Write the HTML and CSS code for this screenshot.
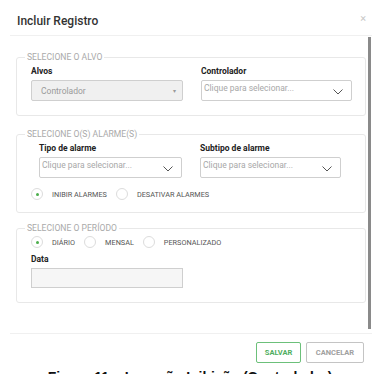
FILE: index.html
```html
<!DOCTYPE html>
<html lang="pt">
<head>
<meta charset="utf-8">
<title>Incluir Registro</title>
<link rel="stylesheet" href="styles.css">
</head>
<body>
<div class="modal">
  <div class="modal-header">
    <h1 class="modal-title">Incluir Registro</h1>
    <span class="close">&times;</span>
  </div>
  <div class="divider"></div>
  <div class="modal-body">
    <fieldset class="group group-alvo">
      <legend>Selecione o alvo</legend>
      <div class="cols cols-alvo">
        <div class="field">
          <label class="label">Alvos</label>
          <div class="select select-disabled"><span>Controlador</span><span class="caret">&#9662;</span></div>
        </div>
        <div class="field">
          <label class="label">Controlador</label>
          <div class="select"><span class="ph">Clique para selecionar...</span><svg class="chev" width="10" height="6" viewBox="0 0 10 6"><path d="M0.5 0.5 L5 5 L9.5 0.5" fill="none" stroke="#555" stroke-width="1"/></svg></div>
        </div>
      </div>
    </fieldset>

    <fieldset class="group group-alarme">
      <legend>Selecione o(s) alarme(s)</legend>
      <div class="cols cols-alarme">
        <div class="field">
          <label class="label">Tipo de alarme</label>
          <div class="select"><span class="ph">Clique para selecionar...</span><svg class="chev" width="10" height="6" viewBox="0 0 10 6"><path d="M0.5 0.5 L5 5 L9.5 0.5" fill="none" stroke="#555" stroke-width="1"/></svg></div>
        </div>
        <div class="field">
          <label class="label">Subtipo de alarme</label>
          <div class="select"><span class="ph">Clique para selecionar...</span><svg class="chev" width="10" height="6" viewBox="0 0 10 6"><path d="M0.5 0.5 L5 5 L9.5 0.5" fill="none" stroke="#555" stroke-width="1"/></svg></div>
        </div>
      </div>
      <div class="radios radios-alarme">
        <span class="radio checked"></span><span class="rlabel">Inibir alarmes</span>
        <span class="radio"></span><span class="rlabel">Desativar alarmes</span>
      </div>
    </fieldset>

    <fieldset class="group group-periodo">
      <legend>Selecione o período</legend>
      <div class="radios">
        <span class="radio checked"></span><span class="rlabel">Diário</span>
        <span class="radio"></span><span class="rlabel">Mensal</span>
        <span class="radio"></span><span class="rlabel">Personalizado</span>
      </div>
      <div class="field field-data">
        <label class="label">Data</label>
        <div class="input"></div>
      </div>
    </fieldset>
    <div class="scrollbar"></div>
  </div>
  <div class="divider"></div>
  <div class="modal-footer">
    <button class="btn btn-save">SALVAR</button>
    <button class="btn btn-cancel">CANCELAR</button>
  </div>
  <p class="caption">Figura 11 – Inserção Inibição (Controlador)</p>
</div>
</body>
</html>
```

FILE: styles.css
```css
html, body {
  margin: 0;
  padding: 0;
  background: #fff;
}
body {
  width: 380px;
  height: 374px;
  overflow: hidden;
  font-family: Roboto, "Liberation Sans", sans-serif;
  color: #333;
}
.modal {
  width: 380px;
}
.modal-header {
  height: 35px;
  display: flex;
  align-items: center;
  justify-content: space-between;
  padding: 0 14px 0 17px;
  box-sizing: border-box;
}
.modal-title {
  margin: 0;
  font-size: 12px;
  font-weight: 500;
  color: #333;
  margin-top: 6px;
}
.close {
  font-size: 11px;
  color: #c8c8c8;
  margin-top: 2px;
}
.divider {
  height: 1px;
  background: #f0f0f0;
  margin: 0 8px 0 10px;
}
.modal-body {
  position: relative;
  height: 297px;
  overflow: hidden;
  padding-top: 16px;
  box-sizing: border-box;
}
.scrollbar {
  position: absolute;
  left: 368px;
  top: 1px;
  width: 3px;
  height: 292px;
  background: #8a8a8a;
}
.group {
  margin: 0 14px 0 16px;
  border: 1px solid #e8e8e8;
  border-radius: 3px;
  padding: 4px 14px 14px 14px;
  min-width: 0;
}
.group legend {
  font-size: 8.6px;
  line-height: 10px;
  text-transform: uppercase;
  color: #aaa;
  padding: 0 2px;
  margin-left: -6px;
}
.group-alarme {
  margin-top: 13px;
  padding-top: 4px;
  padding-bottom: 12px;
}
.group-periodo {
  margin-top: 10px;
  padding-top: 3px;
  padding-bottom: 14px;
}
.cols {
  display: grid;
  column-gap: 18px;
}
.cols-alvo {
  grid-template-columns: 152px 151px;
}
.cols-alarme {
  grid-template-columns: 143px 141px;
  margin-left: 8px;
}
.field {
  display: flex;
  flex-direction: column;
}
.label {
  font-size: 8.5px;
  line-height: 11px;
  font-weight: 700;
  color: #222;
  margin-bottom: 3px;
}
.select {
  height: 21px;
  box-sizing: border-box;
  border: 1px solid #cfcfcf;
  border-radius: 2px;
  background: #fff;
  display: flex;
  justify-content: space-between;
  align-items: flex-start;
  padding: 0 8px 0 2px;
  font-size: 8.5px;
  position: relative;
}
.select .ph {
  color: #a8a8a8;
  line-height: 12px;
  margin-top: 1px;
}
.select .chev {
  margin-top: 8px;
}
.select-disabled {
  background: #f0f0f0;
  align-items: center;
  padding: 0 6px 0 9px;
  color: #9a9a9a;
}
.select-disabled .caret {
  font-size: 6px;
  color: #999;
}
.radios {
  display: flex;
  align-items: center;
  height: 12px;
}
.radios-alarme {
  margin-top: 10px;
}
.radio {
  width: 12px;
  height: 12px;
  box-sizing: border-box;
  border: 1px solid #dcdcdc;
  border-radius: 50%;
  display: inline-flex;
  align-items: center;
  justify-content: center;
  flex: none;
}
.radio.checked::after {
  content: "";
  width: 3px;
  height: 3px;
  border-radius: 50%;
  background: #4cae4c;
}
.rlabel {
  font-size: 7.3px;
  text-transform: uppercase;
  color: #555;
  margin-left: 9px;
  margin-right: 9px;
}
.field-data {
  margin-top: 6px;
  width: 152px;
}
.input {
  height: 20px;
  box-sizing: border-box;
  border: 1px solid #cfcfcf;
  background: #f6f6f6;
}
.modal-footer {
  display: flex;
  justify-content: flex-end;
  gap: 5px;
  padding: 8px 16px 0 0;
}
.btn {
  height: 21px;
  box-sizing: border-box;
  background: #fff;
  border-radius: 2px;
  font-family: Roboto, "Liberation Sans", sans-serif;
  font-size: 7.5px;
  font-weight: 700;
  padding: 0 6px;
}
.btn-save {
  border: 1.5px solid #6cc07a;
  color: #4eae5e;
  width: 45px;
}
.btn-cancel {
  border: 1.5px solid #c4c4c4;
  color: #a0a0a0;
  width: 58px;
}
.caption {
  margin: 6px 0 0 0;
  text-align: center;
  font-family: "Liberation Sans", Arial, sans-serif;
  font-weight: 700;
  font-size: 14px;
  color: #111;
}
```
